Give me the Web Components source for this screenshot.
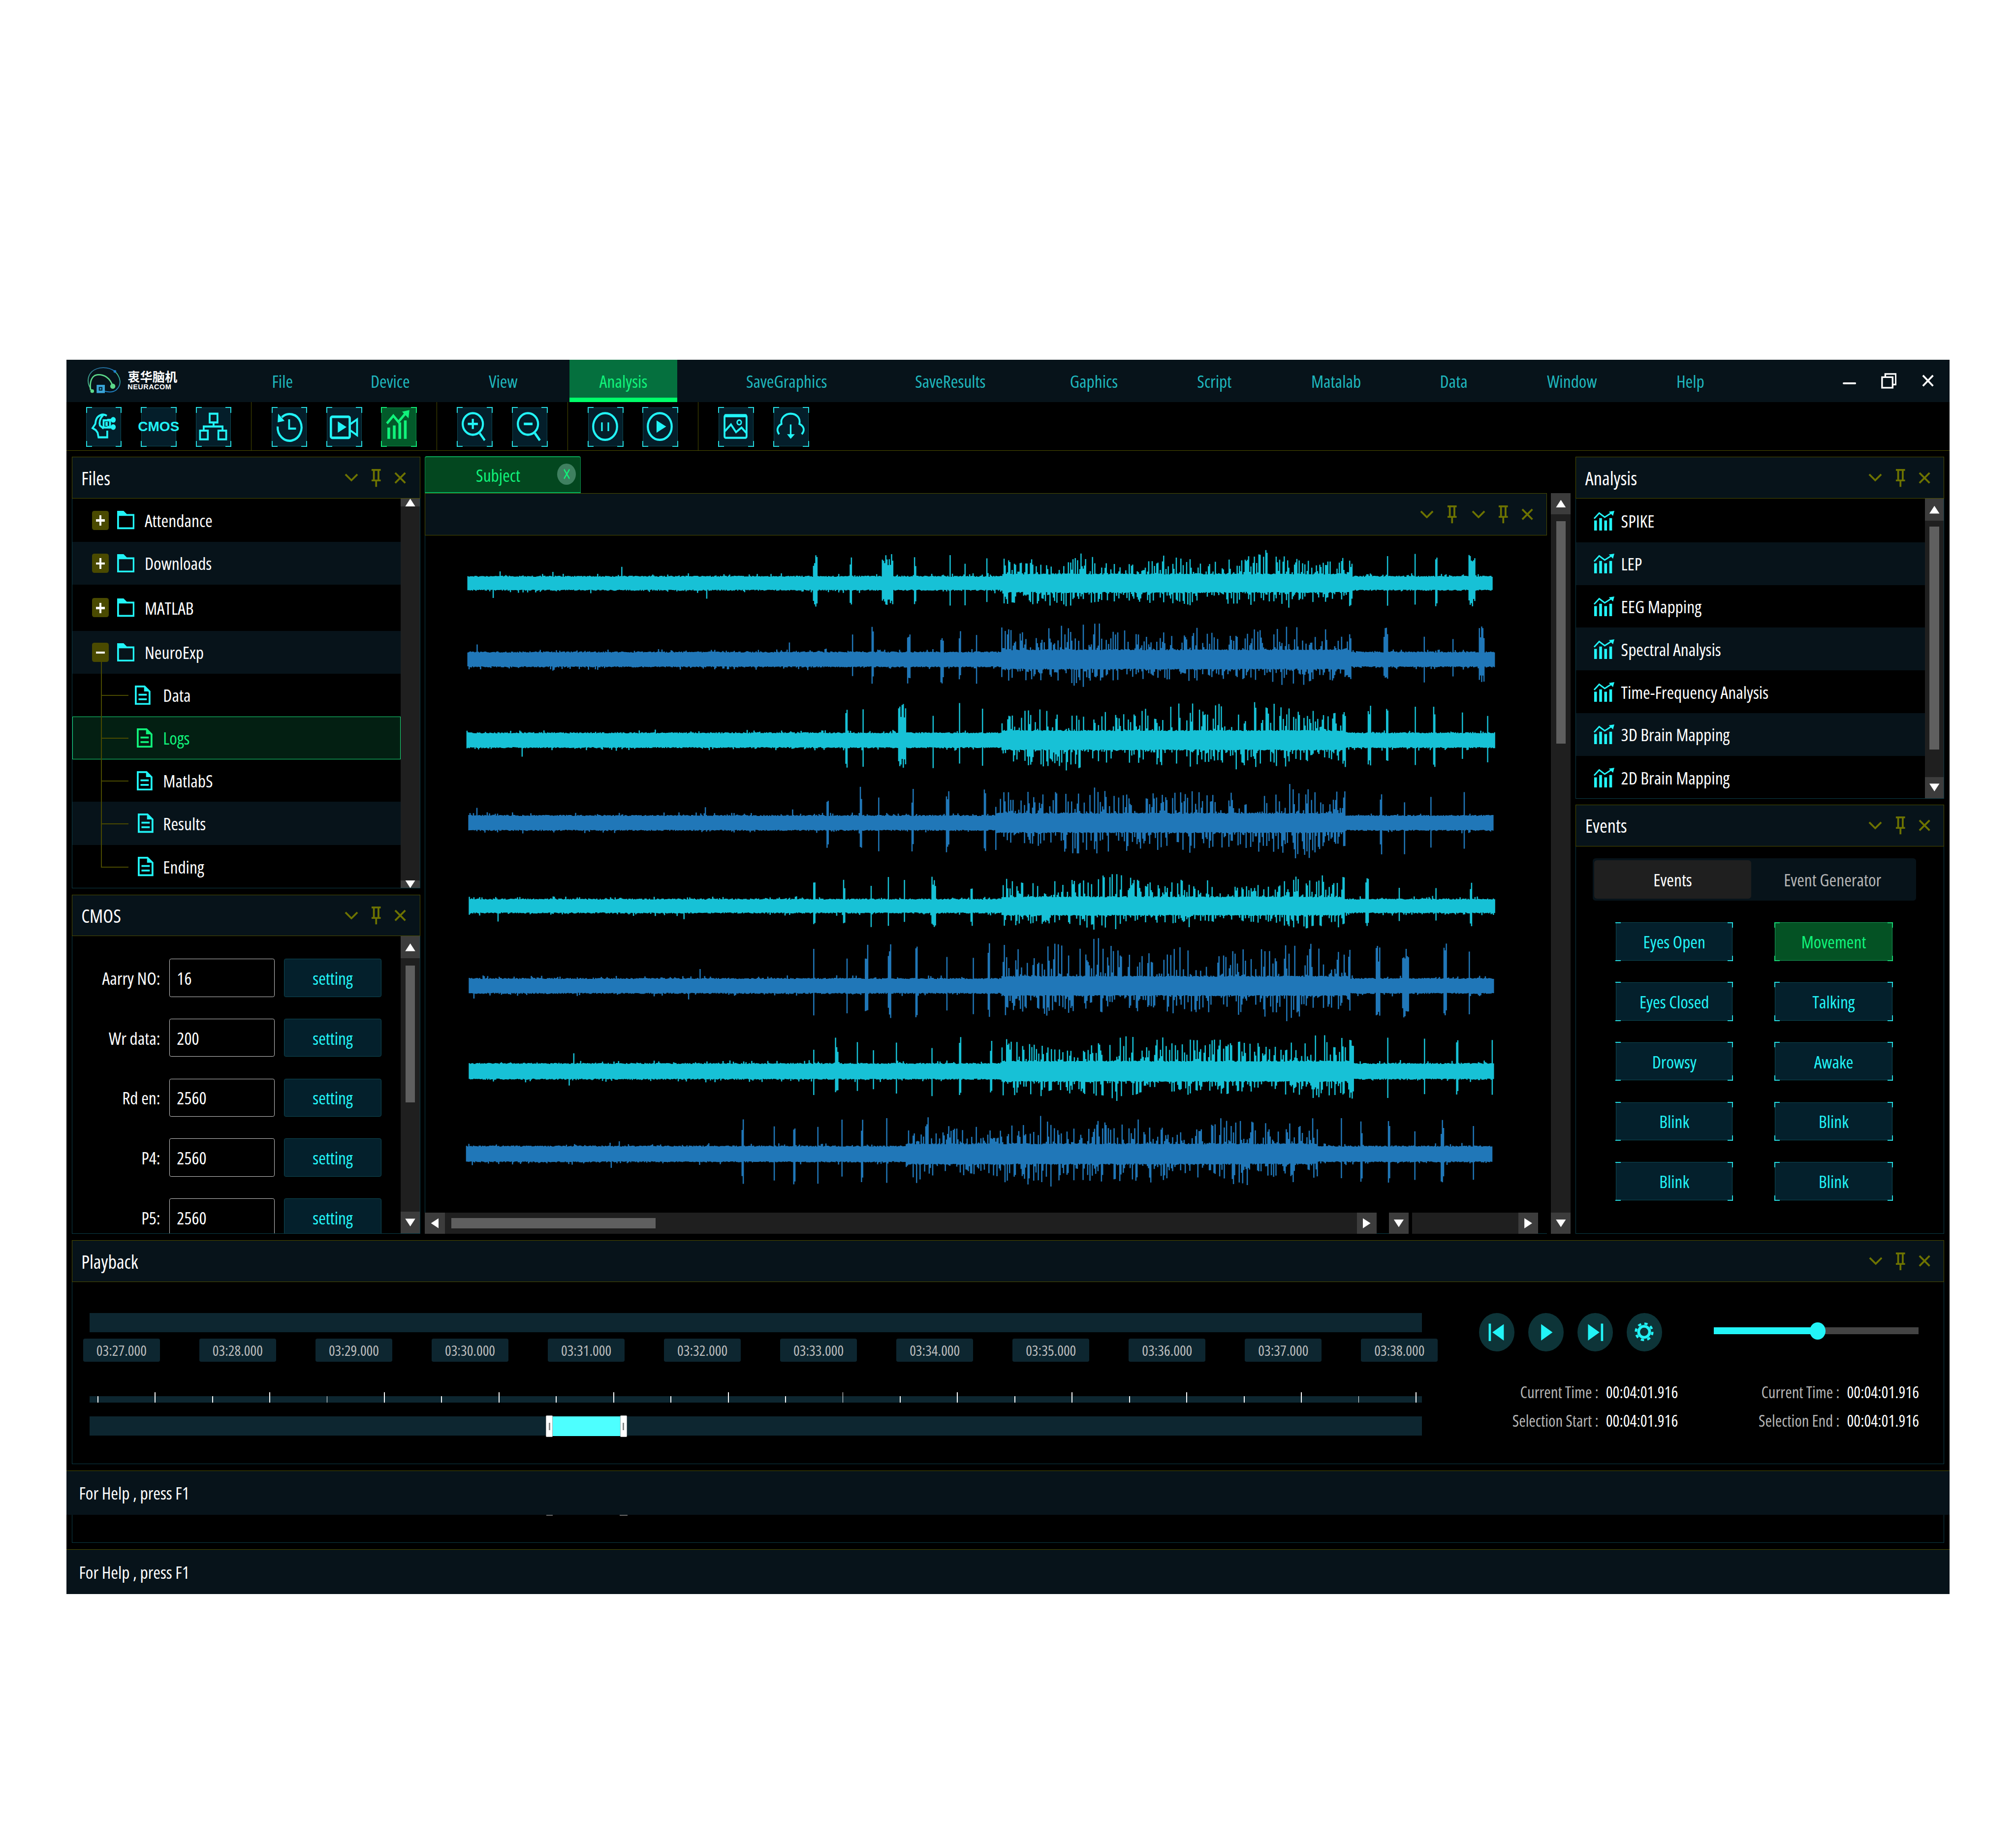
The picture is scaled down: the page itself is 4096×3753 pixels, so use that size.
<!DOCTYPE html>
<html>
<head>
<meta charset="utf-8">
<title>Neuracom</title>
<style>
html,body{margin:0;padding:0;background:#fff;overflow:hidden}
</style>
</head>
<body>
<app-shell>
  <menu-bar>
    <menu-item w="208">File</menu-item>
    <menu-item w="261.5">Device</menu-item>
    <menu-item w="230.5">View</menu-item>
    <menu-item w="235" active style="margin:0 54px 0 29px">Analysis</menu-item>
    <menu-item w="368">SaveGraphics</menu-item>
    <menu-item w="345">SaveResults</menu-item>
    <menu-item w="280">Gaphics</menu-item>
    <menu-item w="245">Script</menu-item>
    <menu-item w="285">Matalab</menu-item>
    <menu-item w="227.5">Data</menu-item>
    <menu-item w="287.5">Window</menu-item>
    <menu-item w="228">Help</menu-item>
  </menu-bar>
  <tool-bar>
    <tool-group first>
      <tool-btn icon="brain"></tool-btn>
      <tool-btn><span style="font:700 30px 'Liberation Sans Narrow','Liberation Sans',sans-serif">CMOS</span></tool-btn>
      <tool-btn icon="tree"></tool-btn>
    </tool-group>
    <tool-group>
      <tool-btn icon="history"></tool-btn>
      <tool-btn icon="video"></tool-btn>
      <tool-btn icon="chart" active></tool-btn>
    </tool-group>
    <tool-group>
      <tool-btn icon="zoomin"></tool-btn>
      <tool-btn icon="zoomout"></tool-btn>
    </tool-group>
    <tool-group>
      <tool-btn icon="pause"></tool-btn>
      <tool-btn icon="play"></tool-btn>
    </tool-group>
    <tool-group last>
      <tool-btn icon="image"></tool-btn>
      <tool-btn icon="cloud"></tool-btn>
    </tool-group>
  </tool-bar>
  <main-grid>
    <side-col slot="left">
      <dock-panel title="Files" style="height:940px">
        <tree-list up="46" thumb-top="15" thumb-h="485" down="46">
          <tree-row kind="plus" h="94" clip="161">Attendance</tree-row>
          <tree-row kind="plus" h="93" alt>Downloads</tree-row>
          <tree-row kind="plus" h="101">MATLAB</tree-row>
          <tree-row kind="minus" h="93" alt line="start">NeuroExp</tree-row>
          <tree-row kind="file" h="93" ix="137" line="mid">Data</tree-row>
          <tree-row kind="file" h="94" ix="141" line="mid" selected>Logs</tree-row>
          <tree-row kind="file" h="92" ix="141" line="mid" clip="121">MatlabS</tree-row>
          <tree-row kind="file" h="94" ix="143" line="mid" alt>Results</tree-row>
          <tree-row kind="file" h="95" ix="143" line="end">Ending</tree-row>
        </tree-list>
      </dock-panel>
      <dock-panel title="CMOS" style="height:739px">
        <cmos-list>
          <cmos-row label="Aarry NO:" value="16"></cmos-row>
          <cmos-row label="Wr data:" value="200"></cmos-row>
          <cmos-row label="Rd en:" value="2560"></cmos-row>
          <cmos-row label="P4:" value="2560"></cmos-row>
          <cmos-row label="P5:" value="2560"></cmos-row>
        </cmos-list>
      </dock-panel>
    </side-col>
    <doc-area slot="center">
      <eeg-view></eeg-view>
    </doc-area>
    <side-col slot="right">
      <dock-panel title="Analysis" style="height:744px">
        <analysis-list>
          <analysis-row h="95">SPIKE</analysis-row>
          <analysis-row h="93" alt>LEP</analysis-row>
          <analysis-row h="93">EEG Mapping</analysis-row>
          <analysis-row h="93" alt>Spectral Analysis</analysis-row>
          <analysis-row h="93">Time-Frequency Analysis</analysis-row>
          <analysis-row h="93" alt>3D Brain Mapping</analysis-row>
          <analysis-row h="94">2D Brain Mapping</analysis-row>
        </analysis-list>
      </dock-panel>
      <dock-panel title="Events" style="height:935px">
        <events-pane>
          <event-btn first>Eyes Open</event-btn>
          <event-btn active>Movement</event-btn>
          <event-btn first>Eyes Closed</event-btn>
          <event-btn>Talking</event-btn>
          <event-btn first>Drowsy</event-btn>
          <event-btn>Awake</event-btn>
          <event-btn first>Blink</event-btn>
          <event-btn>Blink</event-btn>
          <event-btn first>Blink</event-btn>
          <event-btn>Blink</event-btn>
        </events-pane>
      </dock-panel>
    </side-col>
  </main-grid>
  <dock-panel title="Playback" style="height:488px;margin:14px 11px 0">
    <play-back></play-back>
  </dock-panel>
  <status-bar style="margin-top:13px">For Help , press F1</status-bar>
  <dock-remnant></dock-remnant>
  <status-bar style="margin-top:14px">For Help , press F1</status-bar>
</app-shell>

<script>
// icons are drawn on their own box and stretched to the size asked for
var ICONS = {
  chevron: [30, 18, '<path d="M2 2 L15 15 L28 2" fill="none" stroke="currentColor" stroke-width="4"/>'],
  pin: [22, 40, '<path d="M1 3H21 M6 3V25 M16 3V25 M1 26H21 M11 26V40" fill="none" stroke="currentColor" stroke-width="4"/>'],
  cross: [26, 26, '<path d="M2 2L24 24 M24 2L2 24" fill="none" stroke="currentColor" stroke-width="4"/>'],
  minimize: [29, 4, '<rect width="29" height="4" rx="2" fill="currentColor"/>'],
  restore: [34, 34, '<path d="M9 8V2H32V25H25 M2 9H25V32H2Z" fill="none" stroke="currentColor" stroke-width="3.6"/>'],
  close: [26, 27, '<path d="M2 2L24 25 M24 2L2 25" fill="none" stroke="currentColor" stroke-width="4"/>'],
  brain: [76, 76, '<path d="M45 17C36 12 24 16 21 27L20 33L14 41L21 45L25 50L27 59H46V46M37 16C30 22 28 30 30 36L38 42M46 25H55M46 39H55M38 26H52V40H38Z" fill="none" stroke="currentColor" stroke-width="4"/><circle cx="59" cy="25" r="5.5" fill="currentColor"/><circle cx="59" cy="39" r="5.5" fill="currentColor"/><rect x="42" y="29" width="5" height="8" fill="currentColor"/>'],
  tree: [76, 76, '<path d="M30 13H47V30H30Z M38.5 30V38 M17 46V38H58V46 M9 46H26V63H9Z M49 46H66V63H49Z" fill="none" stroke="currentColor" stroke-width="4"/>'],
  history: [76, 76, '<path d="M22 20A26 26 0 1 1 13 38" fill="none" stroke="currentColor" stroke-width="4.5"/><path d="M14 13L28 27L13 30Z" fill="currentColor"/><path d="M38 24V42H53" fill="none" stroke="currentColor" stroke-width="4"/>'],
  video: [76, 76, '<rect x="10" y="19" width="41" height="41" rx="3" fill="none" stroke="currentColor" stroke-width="5"/><path d="M25 28L44 39L25 50Z" fill="currentColor"/><path d="M53 33L67 24V55L53 46" fill="none" stroke="currentColor" stroke-width="4"/>'],
  chart: [76, 76, '<path d="M13 32L27 17L38 29L54 12" fill="none" stroke="currentColor" stroke-width="5"/><path d="M46 9L62 6L60 22Z" fill="currentColor"/><path d="M14 40h6v22h-6z M26 36h6v26h-6z M38 30h6v32h-6z M50 26h6v36h-6z" fill="currentColor"/>'],
  zoomin: [76, 76, '<ellipse cx="35" cy="33" rx="22" ry="21" fill="none" stroke="currentColor" stroke-width="4.5"/><path d="M24 33H46 M35 23V43 M50 51L61 65" fill="none" stroke="currentColor" stroke-width="4.5"/>'],
  zoomout: [76, 76, '<ellipse cx="35" cy="33" rx="22" ry="21" fill="none" stroke="currentColor" stroke-width="4.5"/><path d="M26 33H45 M50 51L61 65" fill="none" stroke="currentColor" stroke-width="5"/>'],
  pause: [76, 76, '<circle cx="38" cy="38" r="26" fill="none" stroke="currentColor" stroke-width="4.5"/><path d="M31 30V47 M45 30V47" fill="none" stroke="currentColor" stroke-width="3.5"/>'],
  play: [76, 76, '<circle cx="38" cy="38" r="26" fill="none" stroke="currentColor" stroke-width="4.5"/><path d="M31 26L52 38L31 50Z" fill="currentColor"/>'],
  image: [76, 76, '<rect x="14" y="16" width="48" height="44" rx="3" fill="none" stroke="currentColor" stroke-width="4"/><rect x="14" y="14" width="48" height="6" fill="currentColor"/><circle cx="46" cy="30" r="4.5" fill="none" stroke="currentColor" stroke-width="3"/><path d="M15 47L28 34L39 49L51 40L61 50" fill="none" stroke="currentColor" stroke-width="4"/>'],
  cloud: [76, 76, '<path d="M13 53C7 46 8 38 18 33C15 21 27 13 38 13C50 13 60 21 57 33C68 38 69 46 62 53" fill="none" stroke="currentColor" stroke-width="4"/><path d="M38 34V55" fill="none" stroke="currentColor" stroke-width="3.5"/><path d="M30 53H47L38 62Z" fill="currentColor"/>'],
  minichart: [45, 45, '<path d="M1 18L12 6L24 15L38 6" fill="none" stroke="currentColor" stroke-width="3.2"/><path d="M33 3L45 1L42 12Z" fill="currentColor"/><path d="M1 22h6v22h-6z M12 17h6v27h-6z M23 22h6v22h-6z M34 17h6v27h-6z" fill="currentColor"/>'],
  folder: [38, 40, '<path d="M2 9H36V38H2Z" fill="none" stroke="currentColor" stroke-width="4"/><path d="M0 0H14L23 9H0Z" fill="currentColor"/>'],
  file: [34, 42, '<path d="M2 2H21L32 13V40H2Z" fill="none" stroke="currentColor" stroke-width="4"/><path d="M20 2V13H32Z" fill="currentColor"/><path d="M8 20H26 M8 30H26" stroke="currentColor" stroke-width="4"/>'],
  prev: [77, 84, '<rect x="21" y="23" width="5" height="38" fill="currentColor"/><path d="M54 24V60L29 42Z" fill="currentColor"/>'],
  next: [77, 84, '<rect x="51" y="23" width="5" height="38" fill="currentColor"/><path d="M23 24V60L48 42Z" fill="currentColor"/>'],
  start: [77, 84, '<path d="M28 24V60L53 42Z" fill="currentColor"/>'],
  gear: [77, 84, '<circle cx="38" cy="41" r="12" fill="none" stroke="currentColor" stroke-width="6"/><circle cx="38" cy="41" r="18" fill="none" stroke="currentColor" stroke-width="5" stroke-dasharray="7 7.14"/>']
};

class UiIcon extends HTMLElement {
  connectedCallback(){
    var def = ICONS[this.getAttribute("name")];
    var w = this.getAttribute("w") || def[0];
    var h = this.getAttribute("h") || def[1];
    this.attachShadow({mode:"open"}).innerHTML =
      '<style>:host{display:block;flex:none;line-height:0}</style>' +
      '<svg width="'+w+'" height="'+h+'" viewBox="0 0 '+def[0]+' '+def[1]+'" preserveAspectRatio="none">'+def[2]+'</svg>';
  }
}
customElements.define("ui-icon", UiIcon);

// little helper: a class per tag, style and markup in an open shadow root
function makeElement(tag, html, init){
  var t = document.createElement("template");
  t.innerHTML = html;
  customElements.define(tag, class extends HTMLElement {
    connectedCallback(){
      if(this.shadowRoot) return;
      this.attachShadow({mode:"open"}).appendChild(t.content.cloneNode(true));
      if(init) init.call(this, this.shadowRoot);
    }
  });
}

makeElement("app-shell", `
<style>
:host{display:flex;flex-direction:column;zoom:.93303;width:4100px;height:2689px;margin:783px 0 0 145px;background:#000;
  font-family:"Open Sans","Noto Sans","Noto Sans CJK SC",sans-serif;font-size:38px;font-stretch:85%;color:#fff}
</style><slot></slot>`);

makeElement("menu-bar", `
<style>
:host{display:flex;height:93px;flex:none;background:#07131a;align-items:stretch}
.logo{width:324px;padding-left:42px;display:flex;align-items:flex-start;padding-top:13px;height:70px;box-sizing:content-box;gap:8px}
.name{display:flex;flex-direction:column;color:#fff;white-space:nowrap}
.cn{font:700 27px/28px "Noto Sans CJK SC",sans-serif;margin-top:9px;height:28px}
.en{font:700 15.5px/16px "Liberation Sans",sans-serif;letter-spacing:.5px;margin-top:2px}
.win{margin-left:auto;display:flex;align-items:center;color:#fff;padding-right:34px}
</style>
<div class="logo">
  <svg width="83" height="63" viewBox="40 10 250 190">
    <defs>
      <linearGradient id="a" x1="0" y1="1" x2="1" y2="0"><stop offset="0" stop-color="#4fd38a"/><stop offset=".6" stop-color="#2b6f93"/><stop offset="1" stop-color="#1f7fc4"/></linearGradient>
      <linearGradient id="b" x1="0" y1="0" x2="0" y2="1"><stop offset="0" stop-color="#46c489"/><stop offset="1" stop-color="#1f7fc4"/></linearGradient>
    </defs>
    <path d="M232 48C190 15 120 15 80 50C50 80 45 130 83 177" fill="none" stroke="url(#a)" stroke-width="6"/>
    <path d="M232 48C270 85 280 135 240 170C215 188 190 185 165 178" fill="none" stroke="url(#b)" stroke-width="6"/>
    <path d="M218 145C200 90 160 65 115 70C85 75 65 105 72 170" fill="none" stroke="#5cd98a" stroke-width="9"/>
    <circle cx="232" cy="48" r="9" fill="#1f83cf"/>
    <circle cx="218" cy="145" r="17" fill="#5cd98a"/>
    <circle cx="83" cy="177" r="12" fill="#5cd98a"/>
    <rect x="112" y="136" width="54" height="54" fill="#3aa5d8"/>
    <rect x="126" y="150" width="24" height="24" fill="#08222f"/>
    <rect x="133" y="157" width="10" height="10" fill="#3aa5d8"/>
  </svg>
  <div class="name"><span class="cn">衷华脑机</span><span class="en">NEURACOM</span></div>
</div>
<slot></slot>
<div class="win">
  <ui-icon name="minimize" style="margin-right:54px"></ui-icon>
  <ui-icon name="restore" style="margin-right:55px"></ui-icon>
  <ui-icon name="close"></ui-icon>
</div>`);

makeElement("menu-item", `
<style>
:host{display:flex;align-items:center;justify-content:center;box-sizing:border-box;color:#1fb7bd;white-space:nowrap}
:host([active]){background:#05703e;color:#11f37b;border-bottom:10px solid #00ff6a;padding-top:10px}
</style><slot></slot>`, function(){
  this.style.width = this.getAttribute("w") + "px";
});

makeElement("tool-bar", `
<style>
:host{display:flex;height:105px;flex:none;border-bottom:2px solid #4b4d00;padding-left:43px;background:#000}
</style><slot></slot>`);

makeElement("tool-group", `
<style>
:host{display:flex;gap:43.5px;padding:11px 44px 0 44px;border-right:2px solid #4b4d00;align-items:flex-start}
:host([first]){padding-left:0}
:host([last]){border-right:0}
</style><slot></slot>`);

makeElement("tool-btn", `
<style>
:host{--c:#26e6ea;--d:#0d4a55;display:flex;align-items:center;justify-content:center;position:relative;box-sizing:border-box;
  width:76px;height:85px;background:#041e2a;border:2px solid var(--d);color:#22f4f7;font-size:30px}
:host([active]){--c:#11f37b;--d:#0b8a45;background:#035a2a;color:#11f37b}
.c{position:absolute;inset:-2px;pointer-events:none;background:
  linear-gradient(var(--c),var(--c)) 0 0/13px 2px no-repeat,
  linear-gradient(var(--c),var(--c)) 100% 0/13px 2px no-repeat,
  linear-gradient(var(--c),var(--c)) 0 100%/13px 2px no-repeat,
  linear-gradient(var(--c),var(--c)) 100% 100%/13px 2px no-repeat,
  linear-gradient(var(--c),var(--c)) 0 0/2px 13px no-repeat,
  linear-gradient(var(--c),var(--c)) 100% 0/2px 13px no-repeat,
  linear-gradient(var(--c),var(--c)) 0 100%/2px 13px no-repeat,
  linear-gradient(var(--c),var(--c)) 100% 100%/2px 13px no-repeat}
.ic{position:absolute;left:-2px;top:-2px}
</style><div class="c"></div><slot></slot>`, function(root){
  var n = this.getAttribute("icon");
  if(n){
    var i = document.createElement("ui-icon");
    i.className = "ic";
    i.setAttribute("name", n);
    i.setAttribute("w", 76);
    i.setAttribute("h", 85);
    root.appendChild(i);
  }
});

makeElement("main-grid", `
<style>
:host{display:grid;grid-template-columns:759px 2495px 803px;column-gap:10.5px;height:1692px;flex:none;padding:13px 11px 0}
</style><slot name="left"></slot><slot name="center"></slot><slot name="right"></slot>`);

makeElement("side-col", `
<style>:host{display:flex;flex-direction:column;gap:13px;min-width:0}</style><slot></slot>`);

makeElement("dock-tools", `
<style>
:host{display:flex;align-items:center;color:#6d7300}
</style>
<ui-icon name="chevron" w="30" h="18" style="margin-right:28px"></ui-icon>
<ui-icon name="pin" w="22" h="40" style="margin-right:29px"></ui-icon>
<ui-icon name="cross" w="26" h="26"></ui-icon>`);

makeElement("dock-panel", `
<style>
:host{display:flex;flex-direction:column;min-height:0;box-sizing:border-box}
.head{display:flex;align-items:center;justify-content:space-between;box-sizing:border-box;height:91px;flex:none;
  background:#07131a;border:2px solid #4b4d00;padding:0 29px 0 20px;font-size:41px}
.body{flex:1;min-height:0;display:flex;border:2px solid #0b3d48;border-top:0;overflow:hidden;background:#000}
::slotted(*){flex:1;min-width:0}
</style>
<div class="head"><span id="t"></span><dock-tools></dock-tools></div>
<div class="body"><slot></slot></div>`, function(root){
  root.getElementById("t").textContent = this.getAttribute("title");
  this.removeAttribute("title");
});

makeElement("scroll-btn", `
<style>
:host{display:flex;align-items:center;justify-content:center;background:#3c3c3c;flex:none}
i{display:block;background:#fff}
:host([dir=up]) i{width:22px;height:17px;clip-path:polygon(50% 0,100% 100%,0 100%)}
:host([dir=down]) i{width:22px;height:17px;clip-path:polygon(0 0,100% 0,50% 100%)}
:host([dir=left]) i{width:17px;height:22px;clip-path:polygon(100% 0,100% 100%,0 50%)}
:host([dir=right]) i{width:17px;height:22px;clip-path:polygon(0 0,100% 50%,0 100%)}
</style><i></i>`);

makeElement("v-scroll", `
<style>
:host{display:flex;flex-direction:column;flex:none;background:#1f1f1f;width:41px}
.track{flex:1;position:relative}
.thumb{background:#5f5f5f;margin:0 auto;width:21px}
</style>
<scroll-btn dir="up" id="u"></scroll-btn>
<div class="track"><div class="thumb" id="th"></div></div>
<scroll-btn dir="down" id="d"></scroll-btn>`, function(root){
  root.getElementById("u").style.height = this.getAttribute("up") + "px";
  root.getElementById("d").style.height = this.getAttribute("down") + "px";
  var th = root.getElementById("th");
  th.style.marginTop = this.getAttribute("thumb-top") + "px";
  th.style.height = this.getAttribute("thumb-h") + "px";
});

makeElement("tree-list", `
<style>
:host{display:flex;min-height:0}
.rows{flex:1;min-width:0;display:flex;flex-direction:column}
</style>
<div class="rows"><slot></slot></div>
<v-scroll id="v"></v-scroll>`, function(root){
  var v = root.getElementById("v");
  ["up","thumb-top","thumb-h","down"].forEach(function(a){ v.setAttribute(a, this.getAttribute(a)); }, this);
});

makeElement("tree-row", `
<style>
:host{display:flex;align-items:center;position:relative;box-sizing:border-box;flex:none;white-space:nowrap;background:#000}
:host([alt]){background:#07131a}
:host([selected]){background:#031f12;outline:2px solid #18e07a;outline-offset:-2px;color:#11f37b}
.lead{display:flex;align-items:center;flex:none;color:#22f4f7}
:host([selected]) .lead{color:#11f37b}
.box{width:37px;height:42px;border-radius:5px;background:#4a4a00;margin:0 18px 0 43px;position:relative;flex:none}
.box::before{content:"";position:absolute;left:9px;right:9px;top:19px;height:5px;background:#fff}
:host([kind=plus]) .box::after{content:"";position:absolute;top:10px;bottom:9px;left:16px;width:5px;background:#fff}
.label{overflow:hidden;display:block}
.vl,.hl{position:absolute;background:#4a4a00}
.vl{left:63px;width:2px;top:0;bottom:0}
:host([line=start]) .vl{top:68px}
:host([line=end]) .vl{bottom:47px}
.hl{left:63px;width:60px;height:2px;top:50%}
:host(:not([line])) .vl,:host(:not([line])) .hl,:host([line=start]) .hl{display:none}
</style>
<div class="vl"></div><div class="hl"></div>
<div class="lead" id="lead"></div>
<span class="label" id="label"><slot></slot></span>`, function(root){
  var k = this.getAttribute("kind");
  var lead = root.getElementById("lead");
  this.style.height = this.getAttribute("h") + "px";
  if(k == "file"){
    lead.style.width = "198px";
    lead.style.paddingLeft = this.getAttribute("ix") + "px";
    lead.style.boxSizing = "border-box";
    lead.innerHTML = '<ui-icon name="file"></ui-icon>';
  } else {
    lead.style.width = "158px";
    lead.innerHTML = '<div class="box"></div><ui-icon name="folder"></ui-icon>';
  }
  if(this.hasAttribute("clip")) root.getElementById("label").style.width = this.getAttribute("clip") + "px";
});

makeElement("cmos-list", `
<style>
:host{display:flex;min-height:0}
.rows{flex:1;min-width:0;display:flex;flex-direction:column;gap:47.5px;padding-top:49px;overflow:hidden}
</style>
<div class="rows"><slot></slot></div>
<v-scroll up="48" thumb-top="16" thumb-h="298" down="47"></v-scroll>`);

makeElement("cmos-row", `
<style>
:host{display:grid;grid-template-columns:192px 229px 213px;column-gap:20px;height:83px;flex:none;align-items:center}
.l{text-align:right;white-space:nowrap}
.v{box-sizing:border-box;height:83px;border:2px solid #c8c8c8;border-radius:4px;background:#000;padding-left:15px;display:flex;align-items:center}
.v span{display:block;width:67px;overflow:hidden;white-space:nowrap}
.b{box-sizing:border-box;height:83px;background:#04202c;border:2px solid #0e4a55;border-radius:4px;color:#22f4f7;display:flex;align-items:center;justify-content:center}
</style>
<div class="l" id="l"></div>
<div class="v"><span id="v"></span></div>
<div class="b">setting</div>`, function(root){
  root.getElementById("l").textContent = this.getAttribute("label");
  root.getElementById("v").textContent = this.getAttribute("value");
});

makeElement("analysis-list", `
<style>
:host{display:flex;min-height:0}
.rows{flex:1;min-width:0;display:flex;flex-direction:column}
</style>
<div class="rows"><slot></slot></div>
<v-scroll up="48" thumb-top="13" thumb-h="485" down="46"></v-scroll>`);

makeElement("analysis-row", `
<style>
:host{display:flex;align-items:center;flex:none;padding-left:38px;gap:15px;background:#000;white-space:nowrap}
:host([alt]){background:#07131a}
ui-icon{color:#22f4f7}
</style>
<ui-icon name="minichart"></ui-icon><slot></slot>`, function(){
  this.style.height = this.getAttribute("h") + "px";
});

makeElement("events-pane", `
<style>
:host{display:block;background:#000;padding:26px 0 0 36px}
.tabs{display:flex;box-sizing:border-box;width:704px;height:92px;background:#07131a;border-radius:6px;padding:4px}
.tabs div{display:flex;align-items:center;justify-content:center;border-radius:6px}
.on{width:341px;height:84px;background:#1f1f1f}
.off{flex:1;color:#b5b5b5}
.grid{display:grid;grid-template-columns:254px 256px;column-gap:92px;row-gap:47.5px;margin:48px 0 0 51px}
</style>
<div class="tabs"><div class="on">Events</div><div class="off">Event Generator</div></div>
<div class="grid"><slot></slot></div>`);

makeElement("event-btn", `
<style>
:host{--c:#26e6ea;--d:#0d4a55;--lv:var(--c);display:flex;align-items:center;justify-content:center;position:relative;box-sizing:border-box;
  height:83px;background:#04202c;border:2px solid var(--d);color:#22f4f7;white-space:nowrap}
:host([first]){--lv:transparent}
:host([active]){--c:#18e07a;--d:#18a05a;background:#045224;color:#11f37b}
.c{position:absolute;inset:-2px;pointer-events:none;background:
  linear-gradient(var(--c),var(--c)) 0 0/12px 2px no-repeat,
  linear-gradient(var(--c),var(--c)) 100% 0/12px 2px no-repeat,
  linear-gradient(var(--c),var(--c)) 0 100%/12px 2px no-repeat,
  linear-gradient(var(--c),var(--c)) 100% 100%/12px 2px no-repeat,
  linear-gradient(var(--lv),var(--lv)) 0 0/2px 12px no-repeat,
  linear-gradient(var(--c),var(--c)) 100% 0/2px 12px no-repeat,
  linear-gradient(var(--lv),var(--lv)) 0 100%/2px 12px no-repeat,
  linear-gradient(var(--c),var(--c)) 100% 100%/2px 12px no-repeat}
</style><div class="c"></div><slot></slot>`);

makeElement("doc-area", `
<style>
:host{display:flex;flex-direction:column;min-height:0;min-width:0}
.tabs{height:79px;flex:none;display:flex;align-items:flex-end}
.tab{box-sizing:border-box;width:339px;height:80px;background:#03471f;border-top:3px solid #0aa558;border-bottom:3px solid #00b060;border-left:1px solid #0a8a48;border-right:1px solid #0a8a48;border-radius:4px 4px 0 0;
  display:flex;align-items:center;color:#11f37b;position:relative;padding-left:110px}
.x{position:absolute;left:287px;top:13px;width:41px;height:46px;border-radius:50%;background:#3f8060;display:flex;align-items:center;justify-content:center;color:#11f37b}
.row{flex:1;min-height:0;display:grid;grid-template-columns:2443px 9px 43px}
.doc{display:flex;flex-direction:column;min-height:0}
.head{height:92px;flex:none;box-sizing:border-box;background:#07131a;border:2px solid #4b4d00;display:flex;justify-content:flex-end;align-items:center;padding-right:29px;color:#6d7300;gap:28px}
.body{flex:1;min-height:0;border-left:2px solid #0b3d48;position:relative;overflow:hidden;background:#000}
.hbar{height:46px;flex:none;display:flex;background:#000}
.track{display:flex;background:#1f1f1f;justify-content:space-between;align-items:center}
.thumb{width:445px;height:23px;background:#5f5f5f;margin-left:14px;margin-right:auto}
.gap{border-bottom:2px solid #0b3d48;box-sizing:border-box;flex:none}
scroll-btn[dir]{width:43px;height:46px}
v-scroll{width:43px}
</style>
<div class="tabs"><div class="tab">Subject<span class="x"><ui-icon name="cross" w="14" h="24"></ui-icon></span></div></div>
<div class="row">
  <div class="doc">
    <div class="head">
      <ui-icon name="chevron"></ui-icon><ui-icon name="pin" style="margin-right:4px"></ui-icon>
      <ui-icon name="chevron"></ui-icon><ui-icon name="pin"></ui-icon><ui-icon name="cross"></ui-icon>
    </div>
    <div class="body"><slot></slot></div>
    <div class="hbar">
      <div class="track" style="width:2072px"><scroll-btn dir="left"></scroll-btn><div class="thumb"></div><scroll-btn dir="right"></scroll-btn></div>
      <div class="gap" style="width:27px"></div>
      <scroll-btn dir="down"></scroll-btn>
      <div style="width:8px;flex:none"></div>
      <div class="track" style="width:274px"><span></span><scroll-btn dir="right"></scroll-btn></div>
      <div class="gap" style="flex:1"></div>
    </div>
  </div>
  <div></div>
  <v-scroll up="46" thumb-top="15" thumb-h="484" down="46"></v-scroll>
</div>`);

// seeded so the traces stay the same from one run to the next
function rng(seed){
  return function(){
    seed |= 0; seed = seed + 0x6D2B79F5 | 0;
    var t = Math.imul(seed ^ seed >>> 15, 1 | seed);
    t = t + Math.imul(t ^ t >>> 7, 61 | t) ^ t;
    return ((t ^ t >>> 14) >>> 0) / 4294967296;
  };
}

function tracePath(tr){
  var r = rng(tr.seed), d = "", nextSpike = tr.s0 + 8;
  for(var x = tr.x0; x <= tr.x1; x += 2.5){
    var up = tr.b + r() * 2.5, dn = tr.b + r() * 2.5;
    if(r() < .1) up += r() * 6;
    if(r() < .1) dn += r() * 6;
    if(x < tr.s0){
      if(r() < .005) up += 8 + r() * 16;
      if(r() < .004) dn += 8 + r() * 16;
    } else if(x >= tr.d0 && x <= tr.d1){
      var wob = .72 + .28 * Math.sin((x - tr.d0) / 47 + tr.seed) * Math.sin((x - tr.d0) / 131);
      up += 5; dn += 5;
      if(r() < .42) up = tr.b + 8 + r() * (tr.up - tr.b - 8) * (wob + .28 * r());
      if(r() < .42) dn = tr.b + 8 + r() * (tr.dn - tr.b - 8) * (wob + .28 * r());
    } else if(x >= nextSpike){
      up = tr.up * (.55 + r() * .45);
      dn = tr.dn * (.65 + r() * .35);
      if(r() < .5) nextSpike = x + 2.5;
      else nextSpike = x + 30 + r() * 50;
    }
    d += "M" + x + " " + (tr.c - up).toFixed(1) + "V" + (tr.c + dn).toFixed(1);
  }
  return d;
}

makeElement("eeg-view", `
<style>:host{display:block;position:absolute;inset:0}svg{display:block}</style>
<svg width="2441" height="1476" viewBox="928 1167 2441 1476" id="s"></svg>`, function(root){
  var light = "#17c1d6", dark = "#2077b8";
  var traces = [
    {c:1271, x0:1021, x1:3251, s0:1765, d0:2184, d1:2940, b:14, up:64, dn:51, col:light, seed:11},
    {c:1437, x0:1021, x1:3258, s0:1850, d0:2184, d1:2940, b:15, up:72, dn:53, col:dark, seed:23},
    {c:1613, x0:1019, x1:3257, s0:1835, d0:2184, d1:2926, b:15, up:84, dn:62, col:light, seed:37},
    {c:1793, x0:1023, x1:3254, s0:1795, d0:2170, d1:2926, b:15, up:79, dn:69, col:dark, seed:41},
    {c:1974, x0:1024, x1:3257, s0:1765, d0:2184, d1:2926, b:14, up:64, dn:48, col:light, seed:53},
    {c:2148, x0:1024, x1:3254, s0:1765, d0:2184, d1:2940, b:15, up:96, dn:70, col:dark, seed:67},
    {c:2334, x0:1024, x1:3254, s0:1765, d0:2184, d1:2940, b:16, up:77, dn:60, col:light, seed:71},
    {c:2514, x0:1018, x1:3251, s0:1610, d0:1975, d1:2870, b:16, up:78, dn:68, col:dark, seed:83}
  ];
  var html = "";
  traces.forEach(function(t){
    html += '<path d="' + tracePath(t) + '" stroke="' + t.col + '" stroke-width="2.7" fill="none"/>';
  });
  root.getElementById("s").innerHTML = html;
});

makeElement("time-label", `
<style>
:host{display:flex;align-items:center;justify-content:center;box-sizing:border-box;width:167px;height:51px;flex:none;background:#0d2630;border-radius:4px;color:#bdbdbd;font-size:32px;white-space:nowrap}
</style><slot></slot>`);

makeElement("time-readout", `
<style>
:host{display:flex;justify-content:flex-end;align-items:center;gap:16px;height:62px;white-space:nowrap;color:#fff;font-size:35px}
.l{color:#b5b5b5}
</style>
<span class="l" id="l"></span><span id="v"></span>`, function(root){
  root.getElementById("l").textContent = this.getAttribute("label");
  root.getElementById("v").textContent = this.getAttribute("value");
});

makeElement("play-back", `
<style>
:host{display:flex;background:#000;padding:67px 0 0 38px;align-items:flex-start}
.line{width:2901px;flex:none}
.bar{height:42px;background:#0d2630}
.labels{display:flex;gap:86px;margin:14px 0 0 -14px;width:2951px}
.ticks{height:14px;margin-top:75px;background:#0d2630;position:relative}
.ticks i{position:absolute;bottom:0;width:2px;background:#fff}
.sel{margin-top:30px;position:relative}
.range{position:absolute;left:994px;top:-2px;height:47px;width:176px;display:flex;align-items:stretch}
.handle{width:15px;flex:none;box-sizing:border-box;background:#fff;border:1px solid #aaa;border-radius:2px;position:relative}
.handle::after{content:"";position:absolute;left:5px;width:3px;top:14px;bottom:14px;background:#888}
.fill{flex:1;background:#4dffff;margin:2px 0 3px}
.right{margin-left:125px;flex:none}
.ctrls{display:flex;align-items:center;height:84px}
.round{width:77px;height:84px;border-radius:50%;background:#0d3438;color:#22f4f7;margin-right:30px;flex:none}
.slider{width:446px;height:15px;background:#444;margin-left:83px;position:relative;margin-bottom:5px}
.slider b{position:absolute;left:0;top:0;bottom:0;width:225px;background:#22f4f7}
.slider u{position:absolute;left:209px;top:-11px;width:34px;height:37px;border-radius:50%;background:#22f4f7}
.times{display:grid;grid-template-columns:433px 525px;margin-top:58px}
</style>
<div class="line">
  <div class="bar"></div>
  <div class="labels" id="labels"></div>
  <div class="ticks" id="ticks"></div>
  <div class="bar sel"><div class="range"><div class="handle"></div><div class="fill"></div><div class="handle"></div></div></div>
</div>
<div class="right">
  <div class="ctrls">
    <div class="round"><ui-icon name="prev"></ui-icon></div>
    <div class="round"><ui-icon name="start"></ui-icon></div>
    <div class="round"><ui-icon name="next"></ui-icon></div>
    <div class="round"><ui-icon name="gear"></ui-icon></div>
    <div class="slider"><b></b><u></u></div>
  </div>
  <div class="times">
    <time-readout label="Current Time :" value="00:04:01.916"></time-readout>
    <time-readout label="Current Time :" value="00:04:01.916"></time-readout>
    <time-readout label="Selection Start :" value="00:04:01.916"></time-readout>
    <time-readout label="Selection End :" value="00:04:01.916"></time-readout>
  </div>
</div>`, function(root){
  var labels = root.getElementById("labels");
  for(var s = 27; s <= 38; s++){
    var l = document.createElement("time-label");
    l.textContent = "03:" + s + ".000";
    labels.appendChild(l);
  }
  var ticks = root.getElementById("ticks");
  for(var i = 0; i < 24; i++){
    var t = document.createElement("i");
    t.style.left = (17 + i * 124.8) + "px";
    t.style.height = (i % 2 ? 23 : 14) + "px";
    ticks.appendChild(t);
  }
});

makeElement("status-bar", `
<style>
:host{display:flex;align-items:center;box-sizing:border-box;height:97px;flex:none;background:#07131a;border-top:2px solid #4b4d00;padding-left:27px;color:#fff;white-space:pre}
</style><slot></slot>`);

makeElement("dock-remnant", `
<style>
:host{display:block;position:relative;box-sizing:border-box;height:61px;flex:none;margin:0 11px;border:2px solid #0b3d48;border-top:0;background:#000}
i{position:absolute;top:0;height:2px;background:#666}
</style>
<i style="left:1033px;width:14px"></i><i style="left:1192px;width:17px"></i>`);
</script>
</body>
</html>
